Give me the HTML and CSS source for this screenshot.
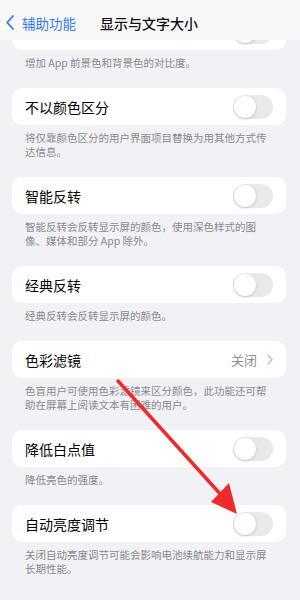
FILE: index.html
```html
<!DOCTYPE html>
<html lang="zh-CN">
<head>
    <meta charset="UTF-8">
    <meta name="viewport" content="width=device-width, initial-scale=1.0">
    <title>显示与文字大小</title>
    <link rel="stylesheet" href="styles.css">
</head>
<body>
    <div class="page">
        <div class="nav">
            <div class="back">
                <svg class="chevron" width="8" height="15" viewBox="0 0 8 15">
                    <path d="M7 1 L1.2 7.5 L7 14" fill="none" stroke="#3478f6" stroke-width="1.8" stroke-linecap="round" stroke-linejoin="round"/>
                </svg>
                <span>辅助功能</span>
            </div>
            <div class="title">显示与文字大小</div>
        </div>

        <!-- row scrolled under the nav bar, only its bottom edge shows -->
        <div class="card card-first">
            <span></span>
            <span class="toggle"></span>
        </div>
        <div class="note">增加 App 前景色和背景色的对比度。</div>

        <div class="card">
            <span class="label">不以颜色区分</span>
            <span class="toggle"></span>
        </div>
        <div class="note">将仅靠颜色区分的用户界面项目替换为用其他方式传达信息。</div>

        <div class="card">
            <span class="label">智能反转</span>
            <span class="toggle"></span>
        </div>
        <div class="note">智能反转会反转显示屏的颜色，使用深色样式的图像、媒体和部分 App 除外。</div>

        <div class="card">
            <span class="label">经典反转</span>
            <span class="toggle"></span>
        </div>
        <div class="note">经典反转会反转显示屏的颜色。</div>

        <div class="card">
            <span class="label">色彩滤镜</span>
            <span class="value">关闭
                <svg width="6" height="11" viewBox="0 0 6 11">
                    <path d="M1 1 L5 5.5 L1 10" fill="none" stroke="#c4c4c7" stroke-width="1.5" stroke-linecap="round" stroke-linejoin="round"/>
                </svg>
            </span>
        </div>
        <div class="note">色盲用户可使用色彩滤镜来区分颜色，此功能还可帮助在屏幕上阅读文本有困难的用户。</div>

        <div class="card">
            <span class="label">降低白点值</span>
            <span class="toggle"></span>
        </div>
        <div class="note">降低亮色的强度。</div>

        <div class="card">
            <span class="label">自动亮度调节</span>
            <span class="toggle"></span>
        </div>
        <div class="note">关闭自动亮度调节可能会影响电池续航能力和显示屏长期性能。</div>

        <svg class="arrow" width="300" height="600" viewBox="0 0 300 600">
            <line x1="118" y1="381" x2="223" y2="497" stroke="#ee2b2b" stroke-width="3.5" stroke-linecap="round"/>
            <polygon points="237,514 211,502 229,483" fill="#ee2b2b"/>
        </svg>
    </div>
</body>
</html>
```

FILE: styles.css
```css
body {
    margin: 0;
    background: #f1f1f6;
    font-family: "Noto Sans CJK SC", "Noto Sans", sans-serif;
}

.page {
    position: relative;
    width: 300px;
    height: 600px;
    overflow: hidden;
}

.nav {
    position: relative;
    z-index: 2;
    height: 40px;
    box-sizing: border-box;
    display: flex;
    align-items: center;
    padding: 5px 0 0 6px;
    background: #f8f8f9;
}

.back {
    display: flex;
    align-items: center;
    gap: 8px;
    color: #3478f6;
    font-size: 13.5px;
}

.title {
    margin-left: 24px;
    font-size: 14px;
    font-weight: 500;
    color: #111;
}

.card {
    height: 37px;
    margin: 0 14px 0 12px;
    padding: 0 13px;
    display: flex;
    align-items: center;
    justify-content: space-between;
    background: #fff;
    border-radius: 10px;
}

.card-first {
    margin-top: -27px;
}

.label {
    font-size: 14px;
    color: #000;
}

.toggle {
    position: relative;
    width: 40px;
    height: 24px;
    border-radius: 12px;
    background: #e9e9eb;
}

.toggle::after {
    content: "";
    position: absolute;
    left: 1px;
    top: 1px;
    width: 22px;
    height: 22px;
    border-radius: 50%;
    background: #fff;
    box-shadow: 0 1px 3px rgba(0, 0, 0, 0.18);
}

.value {
    display: flex;
    align-items: center;
    gap: 10px;
    font-size: 13px;
    color: #8e8e93;
}

.note {
    padding: 6px 28px 18px 25px;
    font-size: 10.5px;
    line-height: 14px;
    color: #8a8a8e;
}

.arrow {
    position: absolute;
    top: 0;
    left: 0;
    pointer-events: none;
}
```
